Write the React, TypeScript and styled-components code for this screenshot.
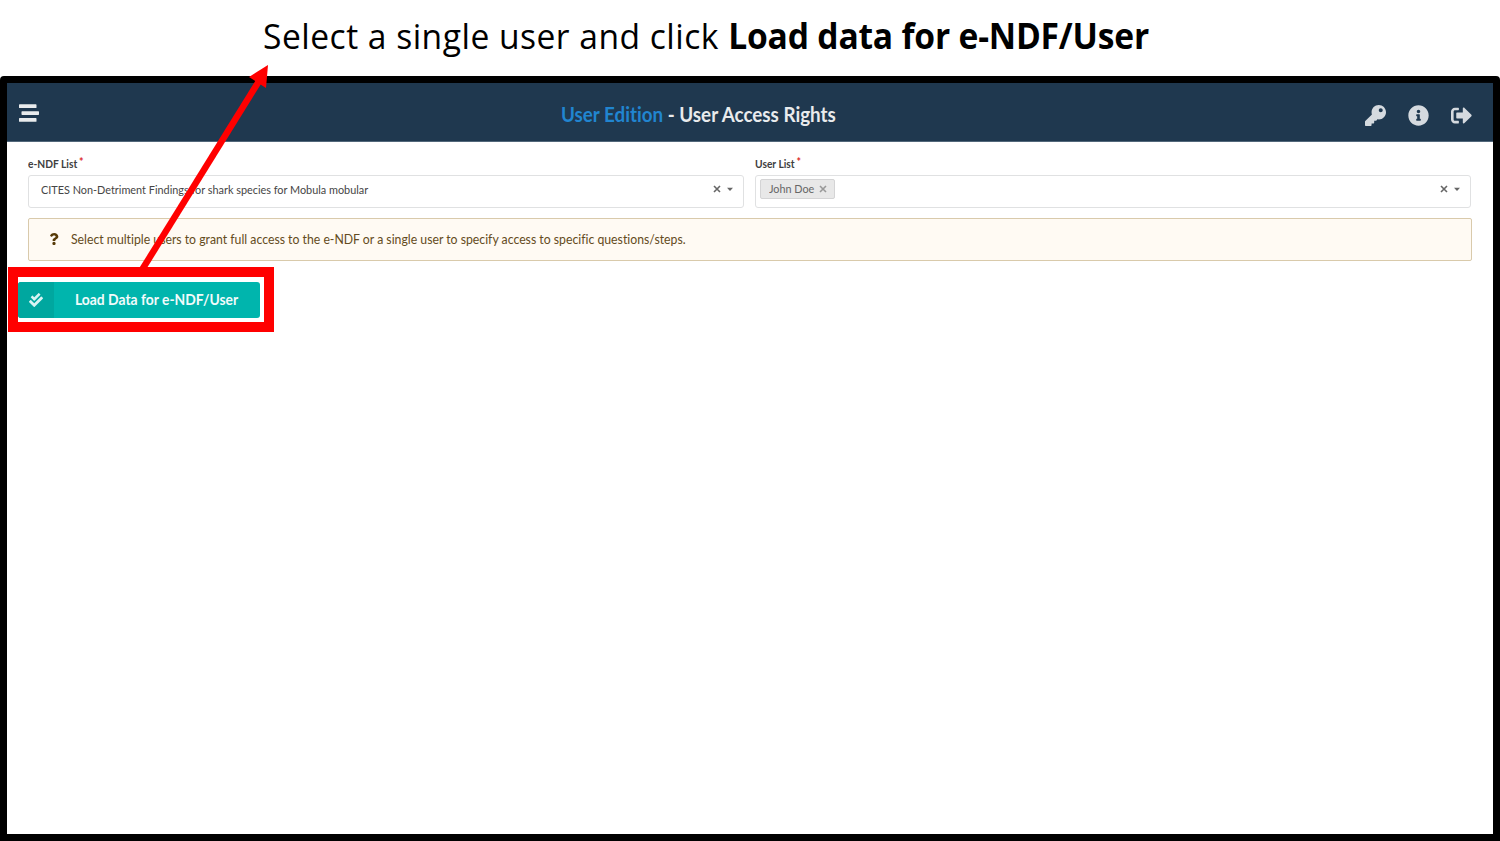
import React from "react";
import styled, { createGlobalStyle } from "styled-components";
import { FaStream, FaKey, FaInfoCircle, FaSignOutAlt, FaQuestion, FaCheckDouble } from "react-icons/fa";

const GlobalStyle = createGlobalStyle`
  * { box-sizing: border-box; }
  body {
    margin: 0;
    background: #fff;
    font-family: Lato, sans-serif;
    font-variant-ligatures: none;
    overflow: hidden;
  }
`;

const Slide = styled.div`
  position: relative;
  display: flex;
  flex-direction: column;
  width: 1500px;
  height: 841px;
`;

/* Narrows a run of text horizontally, keeping its left edge in place. */
const Condensed = styled.span<{ $scale: number }>`
  display: inline-block;
  white-space: nowrap;
  transform: scaleX(${(p) => p.$scale});
  transform-origin: 0 50%;
`;

const Caption = styled.h1`
  height: 76px;
  margin: 0;
  padding-left: 263px;
  font: 400 35px/72px "Open Sans", sans-serif;
  letter-spacing: 0.5px;
  color: #000;
  b { letter-spacing: -0.2px; }
`;

const Frame = styled.main`
  flex: 1;
  border: 7px solid #000;
  border-radius: 4px 4px 0 0;
  background: #fff;
`;

const Header = styled.header`
  display: flex;
  align-items: center;
  justify-content: space-between;
  height: 59px;
  padding: 2px 21px 0 12px;
  border-bottom: 1px solid #52677a;
  background: #1f384f;
`;

const Side = styled.div<{ $end?: boolean }>`
  display: flex;
  flex: 1;
  align-items: center;
  justify-content: ${(p) => (p.$end ? "flex-end" : "flex-start")};
  gap: 22px;
  padding-top: ${(p) => (p.$end ? 5 : 0)}px;
  color: ${(p) => (p.$end ? "#d5dadf" : "#e9ebed")};
  svg { display: block; }
`;

const PageTitle = styled.h2`
  width: 275px;
  margin: 0 95px 0 0;
  font-size: 20px;
  font-weight: 700;
  line-height: 24px;
  padding-top: 1px;
  color: #e9ebed;
`;

const Accent = styled.span`
  color: #2185d0;
`;

const Content = styled.div`
  padding: 15px 22px 0 21px;
`;

const Fields = styled.div`
  display: grid;
  grid-template-columns: 716px 716px;
  column-gap: 11px;
`;

const Label = styled.label`
  display: block;
  height: 18px;
  font-size: 11.5px;
  font-weight: 700;
  line-height: 13px;
  color: #404040;
`;

const Required = styled.sup`
  margin-left: 2px;
  font-size: 12px;
  line-height: 0;
  vertical-align: 2px;
  color: #db2828;
`;

const Select = styled.div<{ $tagged?: boolean }>`
  display: flex;
  align-items: flex-start;
  height: 33px;
  padding: ${(p) => (p.$tagged ? "3px 10px 0 4px" : "3px 10px 0 12px")};
  border: 1px solid #e0e1e2;
  border-radius: 3px;
  font-size: 11.5px;
  line-height: 21px;
  color: #454545;
`;

const Value = styled.span`
  display: flex;
  flex: 1;
`;

const Tag = styled.span`
  display: inline-flex;
  align-items: center;
  width: 75px;
  height: 20px;
  padding: 0 8px;
  border: 1px solid #d4d4d5;
  border-radius: 2px;
  background: #e8e8e8;
  font-size: 12px;
  line-height: 18px;
  color: #666;
  svg { flex: none; color: #999; }
`;

const TagName = styled.span`
  width: 50px;
`;

const Controls = styled.span`
  display: flex;
  align-items: center;
  gap: 6px;
  height: 20px;
  color: #666;
`;

const Notice = styled.div`
  display: flex;
  align-items: center;
  width: 1444px;
  height: 43px;
  margin-top: 10px;
  padding: 0 0 1px 19px;
  border: 1px solid #d9caab;
  border-radius: 2px;
  background: #fffaf3;
  font-size: 12.5px;
  color: #644b21;
  svg { margin-right: 11px; color: #573a08; }
`;

const LoadButton = styled.button`
  display: flex;
  align-items: center;
  width: 242px;
  height: 36px;
  margin: 21px 0 0 -10px;
  padding: 0;
  border: 0;
  border-radius: 3px;
  overflow: hidden;
  background: #00b5ad;
  color: #f2fbfb;
  font: 700 15px Lato, sans-serif;
`;

const ButtonIcon = styled.span`
  display: flex;
  align-items: center;
  justify-content: center;
  width: 36px;
  height: 100%;
  background: #00a79f;
  color: #d9f4f3;
`;

const ButtonText = styled.span`
  padding: 0 0 2px 21px;
`;

const Highlight = styled.div`
  position: absolute;
  left: 8px;
  top: 267px;
  width: 266px;
  height: 65px;
  border: 10px solid #f00;
`;

const Arrow = styled.svg`
  position: absolute;
  left: 130px;
  top: 60px;
`;

const Cross = () => (
  <svg width="8" height="8" viewBox="0 0 8 8" stroke="currentColor" strokeWidth="1.6">
    <path d="M1 1l6 6M7 1l-6 6" />
  </svg>
);

const Caret = () => (
  <svg width="6" height="4" viewBox="0 0 6 4" fill="currentColor">
    <path d="M0 .8h6L3 4z" />
  </svg>
);

export default function App() {
  return (
    <Slide>
      <GlobalStyle />
      <Caption>
        <Condensed $scale={0.96}>Select a single user and click <b>Load data for e-NDF/User</b></Condensed>
      </Caption>
      <Frame>
        <Header>
          <Side><FaStream size={20} /></Side>
          <PageTitle>
            <Condensed $scale={0.94}><Accent>User Edition</Accent> - User Access Rights</Condensed>
          </PageTitle>
          <Side $end>
            <FaKey size={21} />
            <FaInfoCircle size={21} />
            <FaSignOutAlt size={21} />
          </Side>
        </Header>
        <Content>
          <Fields>
            <div>
              <Label><Condensed $scale={0.89}>e-NDF List<Required>*</Required></Condensed></Label>
              <Select>
                <Value>
                  <Condensed $scale={0.945}>CITES Non-Detriment Findings for shark species for Mobula mobular</Condensed>
                </Value>
                <Controls><Cross /><Caret /></Controls>
              </Select>
            </div>
            <div>
              <Label><Condensed $scale={0.89}>User List<Required>*</Required></Condensed></Label>
              <Select $tagged>
                <Value>
                  <Tag>
                    <TagName><Condensed $scale={0.9}>John Doe</Condensed></TagName>
                    <Cross />
                  </Tag>
                </Value>
                <Controls><Cross /><Caret /></Controls>
              </Select>
            </div>
          </Fields>
          <Notice>
            <FaQuestion size={12} />
            <Condensed $scale={0.98}>Select multiple users to grant full access to the e-NDF or a single user to specify access to specific questions/steps.</Condensed>
          </Notice>
          <LoadButton>
            <ButtonIcon><FaCheckDouble size={14} /></ButtonIcon>
            <ButtonText><Condensed $scale={0.925}>Load Data for e-NDF/User</Condensed></ButtonText>
          </LoadButton>
        </Content>
      </Frame>
      <Highlight />
      <Arrow width="150" height="215" viewBox="130 60 150 215">
        <path d="M142.500 269L259 81" stroke="#f00" strokeWidth="6.500" />
        <path d="M268 65L266 88L249 77z" fill="#f00" />
      </Arrow>
    </Slide>
  );
}
